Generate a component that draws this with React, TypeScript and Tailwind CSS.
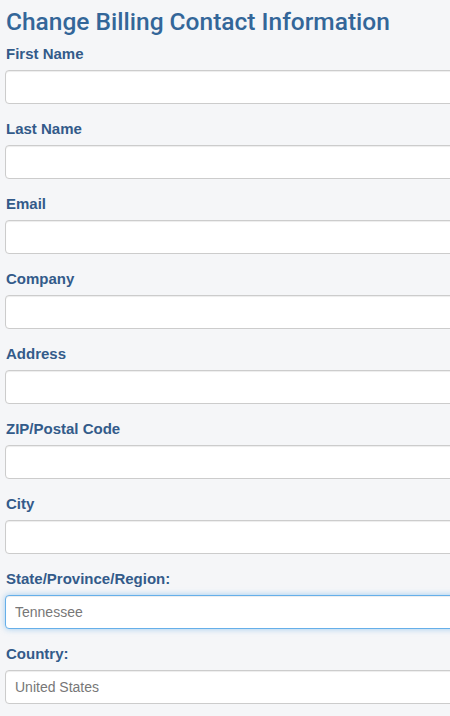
const fields = [
  { label: 'First Name', value: '' },
  { label: 'Last Name', value: '' },
  { label: 'Email', value: '' },
  { label: 'Company', value: '' },
  { label: 'Address', value: '' },
  { label: 'ZIP/Postal Code', value: '' },
  { label: 'City', value: '' },
  { label: 'State/Province/Region:', value: 'Tennessee', focused: true },
  { label: 'Country:', value: 'United States' },
]

const App = () => {
  return (
    <div className="min-h-[716px] w-[450px] overflow-hidden bg-[#f5f6f8] font-['Liberation_Sans',Arial,sans-serif]">
      <div className="w-[480px] pl-[5px] pt-[7px]">
        <h2 className="font-['Roboto',sans-serif] text-[24.5px] leading-[30px] font-medium text-[#336699] pl-[1px] mb-[6px]">
          Change Billing Contact Information
        </h2>
        {fields.map((f) => (
          <div key={f.label} className="mb-[14px]">
            <label className="block text-[15px] leading-[20px] font-bold text-[#335b8a] pl-[1px] pt-[1px] mb-[6px]">
              {f.label}
            </label>
            <input
              readOnly
              value={f.value}
              className={
                f.focused
                  ? 'block w-full h-[34px] rounded-[4px] bg-white px-[9px] text-[14px] text-[#777] border border-[#66afe9] shadow-[inset_0_1px_1px_rgba(0,0,0,0.075),0_0_6px_rgba(102,175,233,0.6)] outline-none'
                  : 'block w-full h-[34px] rounded-[4px] bg-white px-[9px] text-[14px] text-[#777] border border-[#ccc] shadow-[inset_0_1px_1px_rgba(0,0,0,0.075)] outline-none'
              }
            />
          </div>
        ))}
      </div>
    </div>
  )
}

export default App
